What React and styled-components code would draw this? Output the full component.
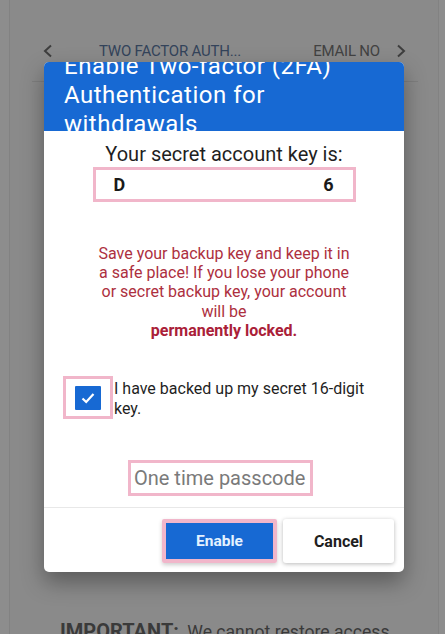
import React from "react";
import styled, { createGlobalStyle } from "styled-components";

const GlobalStyle = createGlobalStyle`
  html, body {
    margin: 0;
    padding: 0;
    background: #8d8d8d;
    font-family: Roboto, "Liberation Sans", sans-serif;
  }
  * {
    box-sizing: border-box;
  }
`;

function Chevron({ right }) {
  return (
    <svg width="10" height="14" viewBox="0 0 10 14">
      <path
        d={right ? "M2 1.5 L8 7 L2 12.5" : "M8 1.5 L2 7 L8 12.5"}
        fill="none"
        stroke="#3e3e3e"
        strokeWidth="2"
      />
    </svg>
  );
}

function App() {
  return (
    <>
      <GlobalStyle />
      <Screen>
        <Page>
          <TabRow>
            <Chevron />
            <Tab first>TWO FACTOR AUTH...</Tab>
            <Tab>EMAIL NO</Tab>
            <Chevron right />
          </TabRow>
          <TabLine />
          <Spacer />
          <Important>
            <b>IMPORTANT:</b> We cannot restore access
          </Important>
        </Page>

        <Modal>
          <Header>
            <Title>
              Enable Two-factor (2FA)
              <br />
              Authentication for
              <br />
              withdrawals
            </Title>
          </Header>
          <Body>
            <KeyLabel>Your secret account key is:</KeyLabel>
            <KeyBox>
              <span>D</span>
              <span>6</span>
            </KeyBox>
            <Warning>
              Save your backup key and keep it in
              <br />
              a safe place! If you lose your phone
              <br />
              or secret backup key, your account
              <br />
              will be
              <br />
              <strong>permanently locked.</strong>
            </Warning>
            <CheckRow>
              <CheckHighlight>
                <CheckBox>
                  <svg width="16" height="16" viewBox="0 0 16 16">
                    <path
                      d="M2.5 8.5 L6.2 12 L13.5 4"
                      fill="none"
                      stroke="#fff"
                      strokeWidth="2.2"
                    />
                  </svg>
                </CheckBox>
              </CheckHighlight>
              <CheckLabel>I have backed up my secret 16-digit key.</CheckLabel>
            </CheckRow>
            <Passcode>One time passcode</Passcode>
          </Body>
          <Footer>
            <EnableOutline>
              <EnableButton>Enable</EnableButton>
            </EnableOutline>
            <CancelButton>Cancel</CancelButton>
          </Footer>
        </Modal>
      </Screen>
    </>
  );
}

const Screen = styled.div`
  position: relative;
  width: 445px;
  height: 634px;
  overflow: hidden;
  display: flex;
  padding: 0 6px 0 9px;
`;

const Page = styled.div`
  flex: 1;
  display: flex;
  flex-direction: column;
  background: #8a8a8a;
  border-left: 1px solid #828282;
  border-right: 1px solid #828282;
`;

const TabRow = styled.div`
  display: flex;
  align-items: center;
  margin-top: 43px;
  padding: 0 32px 0 33px;
  height: 16px;
`;

const Tab = styled.div`
  font-size: 15px;
  color: ${(p) => (p.first ? "#33435a" : "#424242")};
  letter-spacing: -0.2px;
  white-space: nowrap;
  margin-left: ${(p) => (p.first ? "46px" : "auto")};
  margin-right: ${(p) => (p.first ? "0" : "16px")};
`;

const TabLine = styled.div`
  height: 1px;
  background: #7e7e7e;
  margin: 22px 20px 0 22px;
`;

const Spacer = styled.div`
  flex: 1;
`;

const Important = styled.div`
  padding-left: 50px;
  margin-bottom: -9px;
  font-size: 17.6px;
  color: #3a3a3a;
  white-space: nowrap;

  b {
    font-size: 20px;
    font-weight: 700;
    margin-right: 4px;
  }
`;

const Modal = styled.div`
  position: absolute;
  left: 44px;
  top: 62px;
  width: 360px;
  height: 510px;
  background: #fff;
  border-radius: 5px;
  overflow: hidden;
  display: flex;
  flex-direction: column;
  box-shadow: 0 10px 22px rgba(0, 0, 0, 0.35);
`;

const Header = styled.div`
  flex-shrink: 0;
  height: 69px;
  background: #1769d3;
  overflow: hidden;
  padding: 0 20px;
`;

const Title = styled.div`
  margin-top: -10px;
  color: #fff;
  font-size: 24px;
  letter-spacing: 0.5px;
  line-height: 29px;
  white-space: nowrap;
`;

const Body = styled.div`
  flex: 1;
  display: flex;
  flex-direction: column;
  align-items: center;
`;

const KeyLabel = styled.div`
  margin-top: 11px;
  font-size: 20px;
  line-height: 24px;
  color: #1f1f1f;
`;

const KeyBox = styled.div`
  margin-top: 1px;
  width: 263px;
  height: 35px;
  border: 3px solid #f1b6ca;
  display: flex;
  align-items: center;
  justify-content: space-between;
  padding: 0 19px 0 18px;
  font-size: 18px;
  font-weight: 700;
  color: #1a1a1a;
`;

const Warning = styled.div`
  margin-top: 42px;
  font-size: 16px;
  line-height: 19.2px;
  color: #ad3040;
  text-align: center;
  white-space: nowrap;

  strong {
    font-weight: 700;
    color: #aa2038;
  }
`;

const CheckRow = styled.div`
  align-self: stretch;
  display: flex;
  align-items: flex-start;
  margin-top: 36px;
  padding-left: 19px;
`;

const CheckHighlight = styled.div`
  width: 50px;
  height: 43px;
  border: 3px solid #f1b6ca;
  display: flex;
  align-items: center;
  justify-content: center;
  flex-shrink: 0;
`;

const CheckBox = styled.div`
  width: 26px;
  height: 24px;
  background: #1769d3;
  border-radius: 1px;
  display: flex;
  align-items: center;
  justify-content: center;
`;

const CheckLabel = styled.div`
  margin: 3px 0 0 1px;
  width: 268px;
  font-size: 16px;
  line-height: 19.5px;
  color: #1f1f1f;
`;

const Passcode = styled.div`
  align-self: flex-start;
  margin: 41px 0 0 84px;
  width: 185px;
  height: 36px;
  border: 3px solid #f1b6ca;
  padding-left: 3px;
  display: flex;
  align-items: center;
  font-size: 20px;
  color: #7a7a7a;
  white-space: nowrap;
`;

const Footer = styled.div`
  flex-shrink: 0;
  height: 65px;
  border-top: 1px solid #e8e8e8;
  display: flex;
  justify-content: flex-end;
  align-items: flex-start;
  gap: 6px;
  padding: 11px 10px 0 0;
`;

const EnableOutline = styled.div`
  width: 115px;
  height: 44px;
  border: 4px solid #f1b6ca;
  border-radius: 2px;
  box-shadow: 0 2px 4px rgba(0, 0, 0, 0.2);
`;

const EnableButton = styled.button`
  width: 100%;
  height: 100%;
  border: none;
  background: #1769d3;
  color: #e4f2ff;
  font-family: inherit;
  font-size: 15.5px;
  font-weight: 700;
  cursor: pointer;
`;

const CancelButton = styled.button`
  width: 111px;
  height: 44px;
  border: none;
  border-radius: 3px;
  background: #fff;
  color: #1f1f1f;
  font-family: inherit;
  font-size: 16px;
  font-weight: 700;
  box-shadow: 0 1px 4px rgba(0, 0, 0, 0.28);
  cursor: pointer;
`;

export default App;
